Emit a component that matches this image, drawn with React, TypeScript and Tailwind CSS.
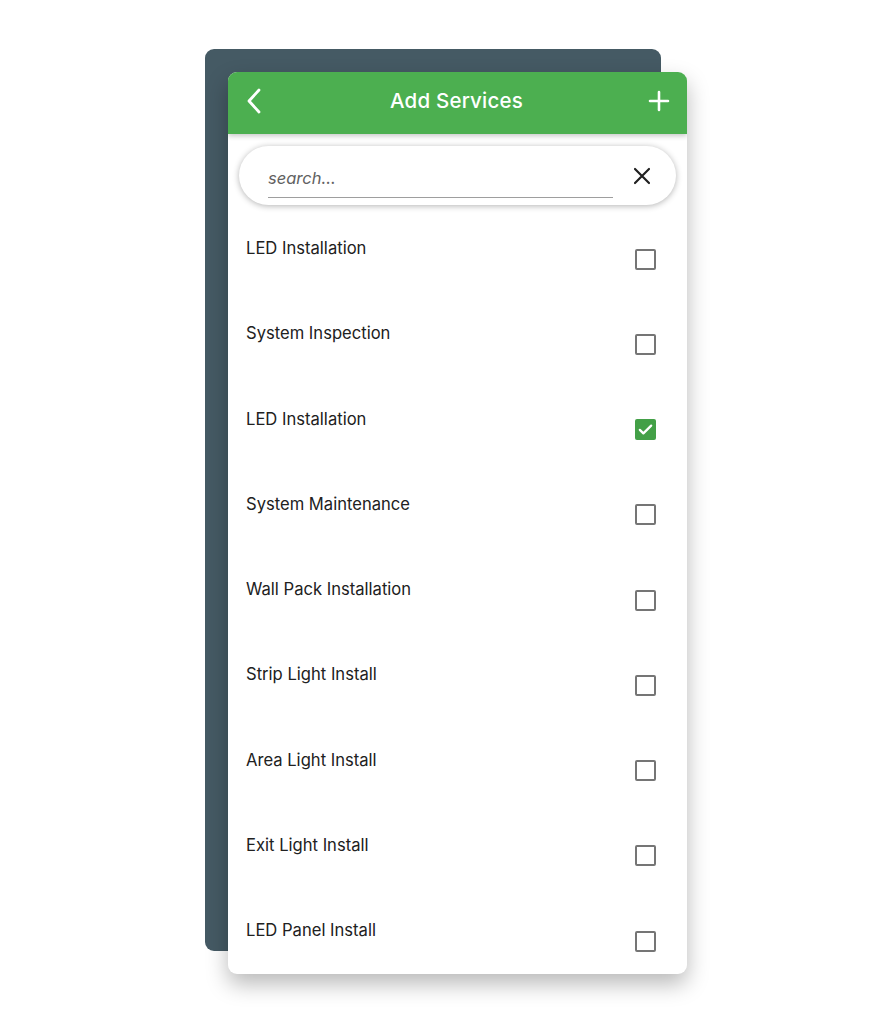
import { useState } from "react";

const services = [
  { name: "LED Installation", checked: false },
  { name: "System Inspection", checked: false },
  { name: "LED Installation", checked: true },
  { name: "System Maintenance", checked: false },
  { name: "Wall Pack Installation", checked: false },
  { name: "Strip Light Install", checked: false },
  { name: "Area Light Install", checked: false },
  { name: "Exit Light Install", checked: false },
  { name: "LED Panel Install", checked: false },
];

function Checkbox({ checked }: { checked: boolean }) {
  if (checked) {
    return (
      <div className="flex h-[21px] w-[21px] items-center justify-center rounded-[2px] bg-[#43a047]">
        <svg width="17" height="17" viewBox="0 0 24 24" fill="none">
          <path d="M4 12.5l5 5L20 6.5" stroke="white" strokeWidth="3.2" strokeLinecap="round" strokeLinejoin="round" />
        </svg>
      </div>
    );
  }
  return <div className="h-[21px] w-[21px] rounded-[2px] border-2 border-[#757575]" />;
}

export default function App() {
  const [query, setQuery] = useState("");

  return (
    <div
      className="min-h-[1024px] bg-white pl-[205px] pt-[49px]"
      style={{ fontFamily: "Inter, 'Noto Sans', sans-serif" }}
    >
      <div className="relative w-[482px] pl-[23px] pt-[23px]">
        {/* 뒤쪽 카드 */}
        <div className="absolute left-0 top-0 h-[902px] w-[456px] rounded-[9px] bg-[#455a64]" />

        <div className="relative h-[902px] w-[459px] overflow-hidden rounded-[9px] bg-white shadow-[0_10px_22px_rgba(0,0,0,0.28)]">
          {/* 헤더 */}
          <div className="relative z-10 flex h-[62px] items-center justify-between bg-[#4caf50] px-[17px] pb-[4px] shadow-[0_2px_5px_rgba(0,0,0,0.22)]">
            <svg width="20" height="26" viewBox="0 0 20 26" fill="none">
              <path d="M14 2L4 13l10 11" stroke="white" strokeWidth="2.8" strokeLinecap="round" strokeLinejoin="round" />
            </svg>
            <h1 className="text-[20.5px] font-medium tracking-[0.2px] text-white">Add Services</h1>
            <svg width="22" height="22" viewBox="0 0 22 22" fill="none">
              <path d="M11 2v18M2 11h18" stroke="white" strokeWidth="2.6" strokeLinecap="round" />
            </svg>
          </div>

          {/* 검색 */}
          <div className="mx-[11px] mt-[12px] flex h-[59px] items-center rounded-full bg-white pl-[29px] pr-[24px] shadow-[0_1px_6px_rgba(0,0,0,0.3)]">
            <div className="flex-1 pt-[13px]">
              <input
                value={query}
                onChange={(e) => setQuery(e.target.value)}
                placeholder="search..."
                className="w-full border-b border-[#9e9e9e] bg-transparent pb-[9px] text-[16.5px] leading-[20px] italic text-[#424242] outline-none placeholder:text-[#616161]"
              />
            </div>
            <svg className="ml-[19px]" width="20" height="20" viewBox="0 0 20 20" fill="none">
              <path d="M3 3l14 14M17 3L3 17" stroke="#212121" strokeWidth="2.2" strokeLinecap="round" />
            </svg>
          </div>

          {/* 목록 */}
          <div className="mt-[15px]">
            {services.map((s, i) => (
              <div key={i} className="flex h-[85.25px] items-start justify-between pl-[18px] pr-[31px]">
                <span className="mt-[18px] text-[16.6px] leading-[20px] text-[#212121]">{s.name}</span>
                <div className="mt-[28.5px]">
                  <Checkbox checked={s.checked} />
                </div>
              </div>
            ))}
          </div>
        </div>
      </div>
    </div>
  );
}
